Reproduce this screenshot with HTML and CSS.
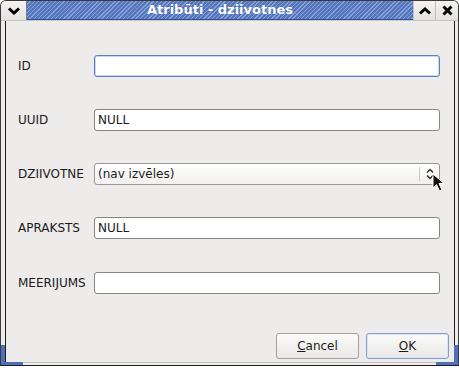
FILE: index.html
```html
<!doctype html>
<html lang="lv">
<head>
    <meta charset="UTF-8">
    <title>Atribūti - dziivotnes</title>
    <link rel="stylesheet" href="styles.css">
</head>
<body>
    <div class="window">
        <div class="titlebar">
            <div class="tb-btn tb-menu">
                <svg width="12" height="8" viewBox="0 0 12 8"><path d="M1 1.5 L6 6 L11 1.5" fill="none" stroke="#000" stroke-width="3"/></svg>
            </div>
            <div class="title">Atribūti - dziivotnes</div>
            <div class="tb-btn">
                <svg width="12" height="8" viewBox="0 0 12 8"><path d="M1 6.5 L6 2 L11 6.5" fill="none" stroke="#000" stroke-width="3"/></svg>
            </div>
            <div class="tb-btn tb-close">
                <svg width="11" height="11" viewBox="0 0 11 11"><path d="M1.5 1.5 L9.5 9.5 M9.5 1.5 L1.5 9.5" fill="none" stroke="#000" stroke-width="3"/></svg>
            </div>
        </div>
        <div class="client">
            <div class="form">
                <div class="row">
                    <label>ID</label>
                    <div class="field focused"></div>
                </div>
                <div class="row">
                    <label>UUID</label>
                    <div class="field">NULL</div>
                </div>
                <div class="row">
                    <label>DZIIVOTNE</label>
                    <div class="field combo">
                        <span class="combo-text">(nav izvēles)</span>
                        <span class="combo-sep"></span>
                        <svg class="combo-arrows" width="8" height="12" viewBox="0 0 8 12"><path d="M1 4.5 L4 1.5 L7 4.5 M1 7.5 L4 10.5 L7 7.5" fill="none" stroke="#222" stroke-width="1.3"/></svg>
                        <svg class="cursor" width="14" height="20" viewBox="0 0 14 20"><path d="M1 1 L1 15 L4.5 11.5 L7.5 18 L10 17 L7 10.5 L12 10.5 Z" fill="#111" stroke="#fff" stroke-width="1"/></svg>
                    </div>
                </div>
                <div class="row">
                    <label>APRAKSTS</label>
                    <div class="field">NULL</div>
                </div>
                <div class="row">
                    <label>MEERIJUMS</label>
                    <div class="field"></div>
                </div>
            </div>
            <div class="actions">
                <button class="btn"><u>C</u>ancel</button>
                <button class="btn btn-default"><u>O</u>K</button>
            </div>
        </div>
        <div class="grip grip-left"></div>
        <div class="grip grip-right"></div>
    </div>
</body>
</html>
```

FILE: styles.css
```css
html, body {
    margin: 0;
    padding: 0;
    background: #fff;
}
body {
    font-family: "DejaVu Sans", Verdana, sans-serif;
    font-size: 12px;
    color: #1a1a1a;
}
.window {
    position: relative;
    width: 459px;
    height: 366px;
    box-sizing: border-box;
    background: #edeceb;
    border-radius: 6px 6px 0 0;
    border: 1px solid #3a3a3a;
    border-bottom: 1px solid #1e1e1e;
    display: flex;
    flex-direction: column;
    overflow: hidden;
}
.titlebar {
    display: flex;
    height: 19px;
    border-bottom: 1px solid #c9c7c3;
}
.tb-btn {
    width: 21px;
    display: flex;
    align-items: center;
    justify-content: center;
    background: linear-gradient(#f4f3f1, #e4e2df);
    border-left: 1px solid #c2c0bc;
}
.tb-menu {
    width: 25px;
    border-left: none;
    border-right: 1px solid #7e7e7e;
}
.tb-close {
    width: 22px;
}
.title {
    flex: 1;
    text-align: center;
    font-weight: bold;
    font-size: 13px;
    line-height: 18px;
    color: #fff;
    background: repeating-linear-gradient(135deg, #5575bd 0 2px, #86a1d8 2px 3px);
    border-bottom: 1px solid #2f4f97;
    text-shadow: 0 0 1px #3b5aa0;
}
.client {
    flex: 1;
    margin: 0 3px 2px 4px;
    border-left: 1px solid #1e1e1e;
    border-right: 1px solid #1e1e1e;
    border-bottom: 1px solid #c4c2be;
    display: flex;
    flex-direction: column;
}
.form {
    flex: 1;
    padding: 34px 14px 0 12px;
    display: flex;
    flex-direction: column;
    gap: 32px;
}
.row {
    display: flex;
    align-items: center;
    height: 22px;
}
.row:nth-child(5) {
    margin-top: 1px;
}
.row label {
    width: 76px;
}
.field {
    flex: 1;
    height: 22px;
    box-sizing: border-box;
    border: 1px solid #868583;
    border-radius: 3px;
    background: #fff;
    padding: 0 3px;
    line-height: 20px;
}
.field.focused {
    border-color: #5a7fc4;
    box-shadow: inset 0 0 0 1px #c9d7f0;
}
.combo {
    position: relative;
    display: flex;
    align-items: center;
    background: linear-gradient(#ffffff, #f1f0ee);
    border-color: #9a9995;
}
.combo-text {
    flex: 1;
}
.combo-sep {
    width: 1px;
    height: 14px;
    background: #c8c7c4;
    margin-right: 6px;
}
.combo-arrows {
    margin-right: 2px;
}
.cursor {
    position: absolute;
    right: -7px;
    top: 9px;
}
.actions {
    display: flex;
    justify-content: flex-end;
    gap: 7px;
    padding: 0 5px 3px 0;
}
.btn {
    width: 83px;
    height: 26px;
    font-family: "DejaVu Sans", Verdana, sans-serif;
    font-size: 12px;
    color: #1a1a1a;
    border: 1px solid #a3a19d;
    border-radius: 3px;
    background: linear-gradient(#fbfbfa, #e9e8e6);
}
.btn-default {
    border-color: #7f9fd0;
    box-shadow: inset 0 0 0 1px #dde6f4;
}
.grip {
    position: absolute;
    bottom: 0;
    width: 4px;
    height: 20px;
    background: #4f6fb8;
}
.grip-left {
    left: 0;
}
.grip-right {
    right: 0;
}
.grip-left::after, .grip-right::after {
    content: "";
    position: absolute;
    bottom: 0;
    width: 22px;
    height: 3px;
    background: #4f6fb8;
}
.grip-left::after {
    left: 0;
}
.grip-right::after {
    right: 0;
}
```
